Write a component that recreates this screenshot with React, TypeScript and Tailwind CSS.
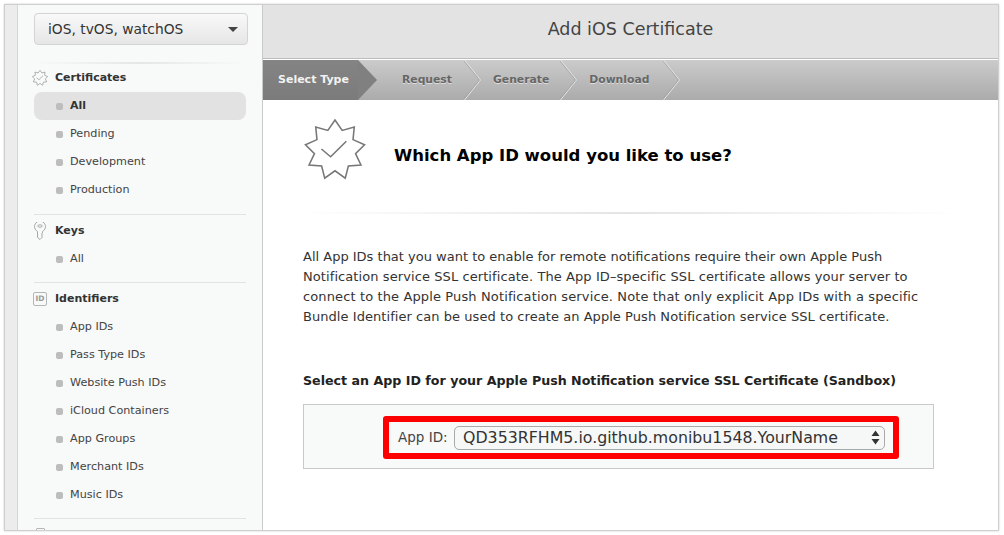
import type { ReactNode } from 'react';

const fontStack = 'font-["DejaVu_Sans",sans-serif]';

// star badge outline, 9 tips
function starPoints(cx: number, cy: number, outer: number, inner: number, tips: number) {
  const pts: string[] = [];
  for (let i = 0; i < tips * 2; i++) {
    const r = i % 2 === 0 ? outer : inner;
    const a = (Math.PI * i) / tips - Math.PI / 2;
    pts.push(`${(cx + r * Math.cos(a)).toFixed(1)},${(cy + r * Math.sin(a)).toFixed(1)}`);
  }
  return pts.join(' ');
}

function CertIcon({ size, stroke, width }: { size: number; stroke: string; width: number }) {
  return (
    <svg width={size} height={size} viewBox="0 0 64 64" fill="none" stroke={stroke} strokeWidth={width}>
      <polygon points={starPoints(32, 32, 31, 21.5, 9)} strokeLinejoin="miter" />
      <path d="M18 31 L27.5 39 L43.7 23" />
    </svg>
  );
}

function KeyIcon() {
  return (
    <svg width="14" height="18" viewBox="0 0 14 18" fill="none" stroke="#a8a8a8" strokeWidth="1">
      <path d="M4.5 9.5 A5.5 5.5 0 1 1 9.5 9.5 V11 L8.5 12 L9.5 13 L8.5 14 L9.5 15 L7 17.5 L4.5 15.5 Z" />
      <ellipse cx="7" cy="4" rx="2.2" ry="1.2" />
    </svg>
  );
}

function NavItem({ label, active }: { label: string; active?: boolean }) {
  return (
    <div className={`flex h-7 items-center rounded-lg pl-[22px] ${active ? 'bg-[#e2e2e2] text-[11px] font-bold text-[#333]' : 'text-[11.2px] text-[#444]'}`}>
      <span className="mr-[7px] size-[7px] shrink-0 rounded-[2px] bg-[#bdbdbd]" />
      {label}
    </div>
  );
}

function NavHeading({ icon, label }: { icon: ReactNode; label: string }) {
  return (
    <div className="relative flex h-[28px] items-center pl-[21px] text-[11px] font-bold text-[#333]">
      <span className="absolute left-[-2px] flex w-[16px] justify-center">{icon}</span>
      {label}
    </div>
  );
}

function Divider({ first }: { first?: boolean }) {
  return <div className={`${first ? 'mt-[10px]' : 'mt-[9px]'} mb-[2px] h-px bg-[#e1e3e3]`} />;
}

function Sidebar() {
  return (
    <aside className="w-[245px] shrink-0 border-r border-[#c9c9c9] bg-[#f8f9f9] px-4 pt-2">
      <div className="flex h-8 w-[214px] items-center justify-between rounded-[4px] border border-[#d4d4d4] bg-gradient-to-b from-[#f9f9f9] to-[#e6e6e6] pr-[9px] pl-[13px] text-[13.8px] text-[#333]">
        iOS, tvOS, watchOS
        <svg width="10" height="5" viewBox="0 0 10 5"><path d="M0 0 H10 L5 5 Z" fill="#444" /></svg>
      </div>
      <div className="mt-[17px] h-[2px] bg-gradient-to-r from-transparent via-[#e6e6e6] to-transparent" />

      <NavHeading icon={<CertIcon size={16} stroke="#9a9a9a" width={3} />} label="Certificates" />
      <NavItem label="All" active />
      <NavItem label="Pending" />
      <NavItem label="Development" />
      <NavItem label="Production" />
      <Divider first />

      <NavHeading icon={<KeyIcon />} label="Keys" />
      <NavItem label="All" />
      <Divider />

      <NavHeading
        icon={<span className="flex h-[14px] w-[14px] items-center justify-center rounded-[2px] border border-[#b5b5b5] text-[7.5px] text-[#999]">ID</span>}
        label="Identifiers"
      />
      <NavItem label="App IDs" />
      <NavItem label="Pass Type IDs" />
      <NavItem label="Website Push IDs" />
      <NavItem label="iCloud Containers" />
      <NavItem label="App Groups" />
      <NavItem label="Merchant IDs" />
      <NavItem label="Music IDs" />
      <Divider />

      <NavHeading icon={<span className="block h-[14px] w-[9px] rounded-[1px] border border-[#b5b5b5]" />} label="Devices" />
    </aside>
  );
}

function StepChevron({ left }: { left: number }) {
  return (
    <svg className="absolute top-0" style={{ left }} width="18" height="40" viewBox="0 0 18 40" fill="none">
      <path d="M0.5 0 L16.5 20 L0.5 40" stroke="#e4e4e4" strokeWidth="1" />
      <path d="M0 1 L15.5 20 L0 39" stroke="#9a9a9a" strokeWidth="0.6" />
    </svg>
  );
}

function Steps() {
  const inactive = 'text-[10.8px] font-bold text-[#666] [text-shadow:0_1px_0_#ddd]';
  return (
    <div className="relative flex h-10 items-center bg-gradient-to-b from-[#cbcbcb] to-[#ababab]">
      <div className="flex h-10 w-[95px] items-center bg-gradient-to-b from-[#848484] to-[#7b7b7b] pl-[15px] text-[11px] font-bold text-[#f2f2f2]">
        Select Type
      </div>
      <svg width="19" height="40" viewBox="0 0 19 40"><path d="M0 0 L19 20 L0 40 Z" fill="#808080" /></svg>
      <span className={`ml-[25px] ${inactive}`}>Request</span>
      <span className={`ml-[41px] ${inactive}`}>Generate</span>
      <span className={`ml-[40px] ${inactive}`}>Download</span>
      <StepChevron left={201} />
      <StepChevron left={297} />
      <StepChevron left={400} />
    </div>
  );
}

export default function App() {
  return (
    <div className={`h-[535px] w-[1004px] overflow-hidden bg-white pt-1 pr-[5px] pb-1 pl-1 ${fontStack}`}>
      <div className="flex h-[527px] overflow-hidden border border-[#cfcfcf] shadow-[0_0_2px_#ccc]">
        <div className="w-[13px] shrink-0 border-r border-[#d6d6d6] bg-[#ececec]" />
        <Sidebar />

        <main className="min-w-0 flex-1 bg-white">
          <header className="flex h-[54px] items-center justify-center border-b border-[#bbbbbb] bg-[#e3e3e3] pb-1 text-[17.5px] text-[#444]">
            Add iOS Certificate
          </header>
          <div className="h-px bg-white" />
          <Steps />

          <div className="flex items-center pt-[19px] pl-[41px]">
            <CertIcon size={62} stroke="#777" width={1.6} />
            <h1 className="ml-[28px] pt-[12px] text-[16.5px] font-bold text-black">Which App ID would you like to use?</h1>
          </div>
          <div className="mx-[38px] mt-[31px] h-[2px] bg-gradient-to-r from-transparent via-[#e4e4e4] to-transparent" />

          <p className="mt-[33px] w-[640px] pl-[40px] text-[13px] leading-5 text-[#333]">
            <span className="block whitespace-nowrap">All App IDs that you want to enable for remote notifications require their own Apple Push</span>
            <span className="block tracking-[0.085px] whitespace-nowrap">Notification service SSL certificate. The App ID–specific SSL certificate allows your server to</span>
            <span className="block tracking-[0.125px] whitespace-nowrap">connect to the Apple Push Notification service. Note that only explicit App IDs with a specific</span>
            <span className="block tracking-[0.055px] whitespace-nowrap">Bundle Identifier can be used to create an Apple Push Notification service SSL certificate.</span>
          </p>

          <h2 className="mt-[44px] pl-[40px] text-[12.65px] leading-5 font-bold whitespace-nowrap text-[#222]">
            Select an App ID for your Apple Push Notification service SSL Certificate (Sandbox)
          </h2>

          <div className="mt-[13px] ml-[40px] h-[65px] w-[631px] border border-[#c9c9c9] bg-[#f8f9f9] pt-[11px] pl-[79px]">
            <div className="flex h-[43px] w-[516px] items-center rounded-[3px] border-[6px] border-[#fe0000] pl-[9px]">
              <span className="w-[56px] shrink-0 text-[13.5px] text-[#444]">App ID:</span>
              <div className="flex h-[24px] w-[431px] shrink-0 items-center justify-between rounded-[5px] border border-[#a9a9a9] bg-[#f6f7f7] pr-[4px] pl-[8px] text-[15.8px] whitespace-nowrap text-[#333]">
                QD353RFHM5.io.github.monibu1548.YourName
                <svg width="9" height="15" viewBox="0 0 9 15" fill="#333"><path d="M4.5 0.5 L8.5 6 H0.5 Z M0.5 9 H8.5 L4.5 14.5 Z" /></svg>
              </div>
            </div>
          </div>
        </main>
      </div>
    </div>
  );
}
